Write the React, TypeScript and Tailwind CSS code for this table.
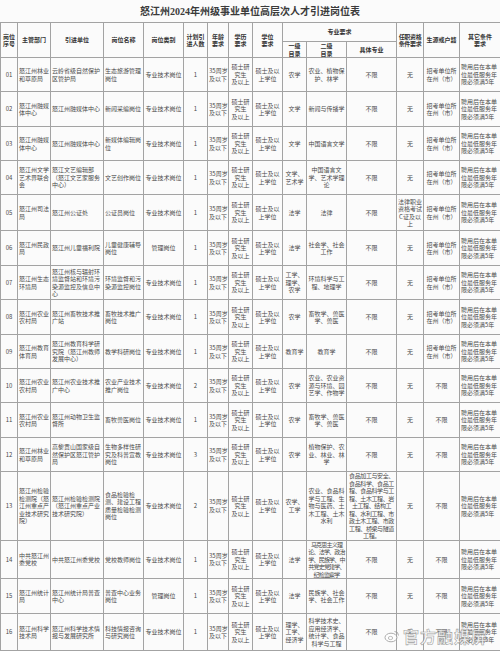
import React from 'react';

type Row = {
  no: string;
  dept: string;
  unit: string;
  post: string;
  type: string;
  num: string;
  major1: string;
  major2: string;
  major2Small?: boolean;
  specific: string;
  specificSmall?: boolean;
  qual: string;
  origin: string;
  h: string;
};

const ORIGIN = '招考单位所在州（市）';

const rows: Row[] = [
  { no: '01', dept: '怒江州林业和草原局', unit: '云岭省级自然保护区管护局', post: '生态旅游管理岗位', type: '专业技术岗位', num: '1', major1: '农学', major2: '农业、植物保护、林学', specific: '不限', qual: '无', origin: ORIGIN, h: 'h-[34px]' },
  { no: '02', dept: '怒江州融媒体中心', unit: '怒江州融媒体中心', post: '新闻采编岗位', type: '专业技术岗位', num: '1', major1: '文学', major2: '新闻与传播学', specific: '不限', qual: '无', origin: ORIGIN, h: 'h-[35px]' },
  { no: '03', dept: '怒江州融媒体中心', unit: '怒江州融媒体中心', post: '新媒体编辑岗位', type: '专业技术岗位', num: '1', major1: '文学', major2: '中国语言文学', specific: '不限', qual: '无', origin: ORIGIN, h: 'h-[34px]' },
  { no: '04', dept: '怒江州文学艺术界联合会', unit: '怒江文艺编辑部（怒江文艺家服务中心）', post: '文艺创作岗位', type: '专业技术岗位', num: '1', major1: '文学、艺术学', major2: '中国语言文学、艺术学理论', specific: '不限', qual: '无', origin: ORIGIN, h: 'h-[34px]' },
  { no: '05', dept: '怒江州司法局', unit: '怒江州公证处', post: '公证员岗位', type: '专业技术岗位', num: '1', major1: '法学', major2: '法律', specific: '不限', qual: '法律职业资格考试C证及以上', origin: ORIGIN, h: 'h-[36px]' },
  { no: '06', dept: '怒江州民政局', unit: '怒江州儿童福利院', post: '儿童健康辅导岗位', type: '管理岗位', num: '1', major1: '法学', major2: '社会学、社会工作', specific: '不限', qual: '无', origin: ORIGIN, h: 'h-[35px]' },
  { no: '07', dept: '怒江州生态环境局', unit: '怒江州核与辐射环境监督站和环境污染源监控及信息中心', post: '环境监督和污染源监控岗位', type: '专业技术岗位', num: '1', major1: '工学、理学、农学', major2: '环境科学与工程、地理学', specific: '不限', qual: '无', origin: ORIGIN, h: 'h-[34px]' },
  { no: '08', dept: '怒江州农业农村局', unit: '怒江州畜牧技术推广站', post: '畜牧技术推广岗位', type: '专业技术岗位', num: '1', major1: '农学', major2: '畜牧学、兽医学、兽医', specific: '不限', qual: '无', origin: ORIGIN, h: 'h-[35px]' },
  { no: '09', dept: '怒江州教育体育局', unit: '怒江州教育科学研究院（怒江州教师发展中心）', post: '教学科研岗位', type: '专业技术岗位', num: '1', major1: '教育学', major2: '教育学', specific: '不限', qual: '无', origin: ORIGIN, h: 'h-[34px]' },
  { no: '10', dept: '怒江州农业农村局', unit: '怒江州农业技术推广中心', post: '农业产业技术推广岗位', type: '专业技术岗位', num: '2', major1: '农学', major2: '农业、农业资源与环境、园艺学、作物学', specific: '不限', qual: '无', origin: '不限', h: 'h-[34px]' },
  { no: '11', dept: '怒江州农业农村局', unit: '怒江州动物卫生监督所', post: '畜牧兽医岗位', type: '专业技术岗位', num: '1', major1: '农学', major2: '畜牧学、兽医学、兽医', specific: '不限', qual: '无', origin: '不限', h: 'h-[35px]' },
  { no: '12', dept: '怒江州林业和草原局', unit: '高黎贡山国家级自然保护区怒江管护局', post: '生物多样性研究及科普宣教岗位', type: '专业技术岗位', num: '3', major1: '农学', major2: '植物保护、农业、林业、林学', specific: '不限', qual: '无', origin: '不限', h: 'h-[34px]' },
  { no: '13', dept: '怒江州检验检测院（怒江州重点产业技术研究院）', unit: '怒江州检验检测院（怒江州重点产业技术研究院）', post: '食品检验检测、建设工程质量检验检测岗位', type: '专业技术岗位', num: '2', major1: '农学、工学', major2: '农业、食品科学与工程、生物与医药、土木工程、土木水利', specific: '食品加工与安全、食品科学、食品工程、食品科学与工程、土木工程、岩土工程、结构工程、水利工程、市政土木工程、市政工程、桥梁与隧道工程。', specificSmall: true, qual: '无', origin: '不限', h: 'h-[59px]' },
  { no: '14', dept: '中共怒江州委党校', unit: '中共怒江州委党校', post: '党校教师岗位', type: '专业技术岗位', num: '1', major1: '法学', major2: '马克思主义理论、法学、政治学、民族学、中共党史党建学、纪检监察学', major2Small: true, specific: '不限', qual: '无', origin: '不限', h: 'h-[35px]' },
  { no: '15', dept: '怒江州统计局', unit: '怒江州统计局普查中心', post: '普查中心业务岗位', type: '管理岗位', num: '1', major1: '法学', major2: '民族学、社会学、社会工作', specific: '不限', qual: '无', origin: '不限', h: 'h-[35px]' },
  { no: '16', dept: '怒江州科学技术局', unit: '怒江州科学技术情报与发展研究所', post: '科技情报咨询与研究岗位', type: '专业技术岗位', num: '1', major1: '理学、工学、经济学', major2: '科学技术史、应用经济学、统计学、食品科学与工程', specific: '不限', qual: '无', origin: '不限', h: 'h-[37px]' },
];

const td = 'border border-[#a3a3a3] align-middle px-[1px] py-0 text-[6px] leading-[7.5px] text-[#4a4a4a] break-all';
const th = 'border border-[#a3a3a3] align-middle px-0 py-0 text-[6px] leading-[7.5px] font-bold text-[#333]';
const smallSpecific = 'tracking-[-0.4px] leading-[6.2px]';
const smallMajor = 'tracking-[-0.8px] leading-[6.2px]';

export default function App() {
  return (
    <div className="relative w-[500px] h-[651px] overflow-hidden bg-[#fbfbfb] font-['Noto_Sans_CJK_SC',sans-serif]">
      <h1 className="h-[22px] pt-[6px] text-center text-[10px] leading-[12px] font-bold text-[#3a3a3a] font-['Liberation_Serif','Noto_Sans_CJK_SC',serif]">
        怒江州2024年州级事业单位高层次人才引进岗位表
      </h1>
      <table className="table-fixed border-collapse w-[500px]">
        <colgroup>
          <col className="w-[17px]" />
          <col className="w-[33px]" />
          <col className="w-[53px]" />
          <col className="w-[40px]" />
          <col className="w-[40px]" />
          <col className="w-[24px]" />
          <col className="w-[21px]" />
          <col className="w-[24px]" />
          <col className="w-[30px]" />
          <col className="w-[24px]" />
          <col className="w-[40px]" />
          <col className="w-[50px]" />
          <col className="w-[27px]" />
          <col className="w-[36px]" />
          <col className="w-[41px]" />
        </colgroup>
        <thead>
          <tr className="h-[19px] text-center">
            <th rowSpan={2} className={th}>岗位<br />序号</th>
            <th rowSpan={2} className={th}>主管部门</th>
            <th rowSpan={2} className={th}>引进单位</th>
            <th rowSpan={2} className={th}>岗位名称</th>
            <th rowSpan={2} className={th}>岗位类别</th>
            <th rowSpan={2} className={th}>计划引<br />进人数</th>
            <th rowSpan={2} className={th}>年龄<br />要求</th>
            <th rowSpan={2} className={th}>学历<br />要求</th>
            <th rowSpan={2} className={th}>学位<br />要求</th>
            <th colSpan={3} className={th}>专业要求</th>
            <th rowSpan={2} className={`${th} tracking-[-0.3px]`}>任职资格<br />条件要求</th>
            <th rowSpan={2} className={th}>生源或户籍</th>
            <th rowSpan={2} className={th}>其它条件<br />要求</th>
          </tr>
          <tr className="h-[16px] text-center">
            <th className={th}>一级<br />目录</th>
            <th className={th}>二级<br />目录</th>
            <th className={th}>具体专业</th>
          </tr>
        </thead>
        <tbody>
          {rows.map((r) => (
            <tr key={r.no} className={r.h}>
              <td className={`${td} text-center`}>{r.no}</td>
              <td className={td}>{r.dept}</td>
              <td className={td}>{r.unit}</td>
              <td className={td}>{r.post}</td>
              <td className={`${td} text-center`}>{r.type}</td>
              <td className={`${td} text-center`}>{r.num}</td>
              <td className={`${td} text-center px-0 whitespace-nowrap`}>35周岁<br />及以下</td>
              <td className={`${td} text-center`}>硕士研<br />究生<br />及以上</td>
              <td className={`${td} text-center`}>硕士及以<br />上学位</td>
              <td className={`${td} text-center`}>{r.major1}</td>
              <td className={`${td} text-center ${r.major2Small ? smallMajor : ''}`}>{r.major2}</td>
              <td className={`${td} text-center ${r.specificSmall ? smallSpecific : ''}`}>{r.specific}</td>
              <td className={`${td} text-center`}>{r.qual}</td>
              <td className={`${td} text-center`}>{r.origin}</td>
              <td className={td}>聘用后在本单位最低服务年限必须满5年</td>
            </tr>
          ))}
        </tbody>
      </table>

      {/* weibo watermark */}
      <div className="absolute left-[384px] top-[627px] flex items-center gap-[3px] opacity-80">
        <svg width="16" height="14" viewBox="0 0 16 14" fill="none">
          <ellipse cx="7" cy="8.5" rx="6" ry="4.3" stroke="#9a9a9a" strokeWidth="1" fill="#ffffff" />
          <ellipse cx="6.5" cy="9" rx="2.2" ry="1.6" stroke="#9a9a9a" strokeWidth="0.8" />
          <path d="M10.5 2.5 A4 4 0 0 1 14.5 6.5" stroke="#9a9a9a" strokeWidth="1" />
        </svg>
        <span className="text-[16px] leading-[18px] font-bold text-white [-webkit-text-stroke:0.6px_#8a8a8a] tracking-[1px]">
          官方融媒屏
        </span>
      </div>
    </div>
  );
}
